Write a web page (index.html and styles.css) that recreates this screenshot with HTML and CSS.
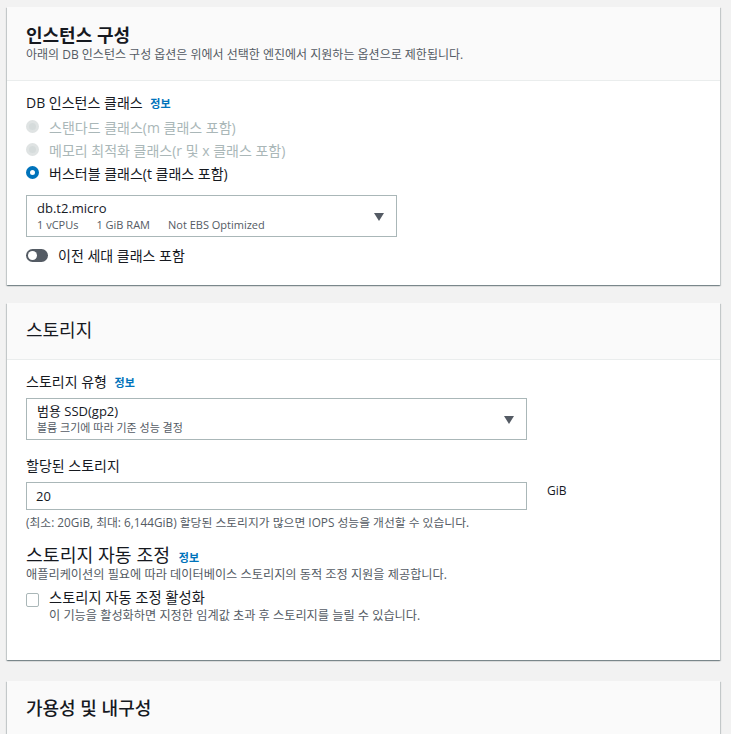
FILE: index.html
```html
<!DOCTYPE html>
<html lang="ko">
<head>
<meta charset="utf-8">
<title>DB 설정</title>
<link rel="stylesheet" href="styles.css">
</head>
<body>
<div class="page">
  <section class="card card-1">
    <header class="card-header">
      <h2 class="card-title">인스턴스 구성</h2>
      <p class="card-desc">아래의 DB 인스턴스 구성 옵션은 위에서 선택한 엔진에서 지원하는 옵션으로 제한됩니다.</p>
    </header>
    <div class="card-body body-1">
      <div class="label">DB 인스턴스 클래스 <span class="info">정보</span></div>
      <div class="radios">
        <div class="radio-row disabled"><span class="radio radio-off"></span><span>스탠다드 클래스(m 클래스 포함)</span></div>
        <div class="radio-row disabled"><span class="radio radio-off"></span><span>메모리 최적화 클래스(r 및 x 클래스 포함)</span></div>
        <div class="radio-row"><span class="radio radio-on"></span><span>버스터블 클래스(t 클래스 포함)</span></div>
      </div>
      <div class="select select-small">
        <div class="select-text">
          <div class="select-main">db.t2.micro</div>
          <div class="select-sub"><span>1 vCPUs</span><span>1 GiB RAM</span><span>Not EBS Optimized</span></div>
        </div>
        <span class="caret"></span>
      </div>
      <div class="toggle-row">
        <span class="toggle"><span class="knob"></span></span>
        <span>이전 세대 클래스 포함</span>
      </div>
    </div>
  </section>

  <section class="card card-2">
    <header class="card-header">
      <h2 class="card-title">스토리지</h2>
    </header>
    <div class="card-body body-2">
      <div class="label">스토리지 유형 <span class="info">정보</span></div>
      <div class="select select-wide">
        <div class="select-text">
          <div class="select-main">범용 SSD(gp2)</div>
          <div class="select-sub">볼륨 크기에 따라 기준 성능 결정</div>
        </div>
        <span class="caret"></span>
      </div>
      <div class="label label-alloc">할당된 스토리지</div>
      <div class="input-row">
        <div class="input">20</div>
        <span class="unit">GiB</span>
      </div>
      <div class="hint hint-latin">(최소: 20GiB, 최대: 6,144GiB) 할당된 스토리지가 많으면 IOPS 성능을 개선할 수 있습니다.</div>
      <div class="subhead">스토리지 자동 조정 <span class="info">정보</span></div>
      <div class="hint">애플리케이션의 필요에 따라 데이터베이스 스토리지의 동적 조정 지원을 제공합니다.</div>
      <div class="check-row">
        <span class="checkbox"></span>
        <div>
          <div class="check-label">스토리지 자동 조정 활성화</div>
          <div class="hint">이 기능을 활성화하면 지정한 임계값 초과 후 스토리지를 늘릴 수 있습니다.</div>
        </div>
      </div>
    </div>
  </section>

  <section class="card card-3">
    <header class="card-header">
      <h2 class="card-title">가용성 및 내구성</h2>
    </header>
  </section>
</div>
</body>
</html>
```

FILE: styles.css
```css
html, body {
  margin: 0;
  padding: 0;
  background: #f2f2f2;
}
body {
  font-family: "Open Sans", "Noto Sans CJK KR", sans-serif;
  color: #16191f;
  font-size: 14px;
  overflow: hidden;
}
.page {
  padding: 7px 11px 0 7px;
  display: flex;
  flex-direction: column;
}
.card {
  background: #fff;
  box-shadow: 0 1px 1px 0 rgba(0, 28, 36, .3), 1px 1px 1px 0 rgba(0, 28, 36, .15), -1px 1px 1px 0 rgba(0, 28, 36, .15);
}
.card-2 { margin-top: 18px; }
.card-3 { margin-top: 21px; }
.card-header {
  background: #fafafa;
  padding: 15px 19px 17px;
  border-bottom: 1px solid #eaeded;
}
.card-1 .card-header {
  padding: 17px 19px 16px;
}
.card-title {
  margin: 0;
  font-size: 18px;
  line-height: 24px;
  font-weight: 700;
}
.card-1 .card-title {
  line-height: 22px;
}
.card-2 .card-title {
  font-weight: 400;
}
.card-3 .card-title {
  font-weight: 500;
}
.card-desc {
  margin: 0;
  font-size: 12px;
  line-height: 18px;
  color: #545b64;
}
.card-body {
  padding: 12px 19px 19px;
}
.label {
  line-height: 20px;
  font-size: 14px;
}
.info {
  color: #0073bb;
  font-size: 11px;
  line-height: 1;
  font-weight: 700;
  margin-left: 4px;
}
.radios {
  margin-top: 2px;
}
.radio-row {
  height: 23px;
  display: flex;
  align-items: center;
  gap: 10px;
}
.radio-row.disabled {
  color: #aab7b8;
}
.radio {
  width: 13px;
  height: 13px;
  border-radius: 50%;
  box-sizing: border-box;
  flex: none;
}
.radio-off {
  background: #d5dbdb;
  border: 3px solid #dfe3e3;
}
.radio-on {
  background: #fff;
  border: 4px solid #0073bb;
}
.select {
  border: 1px solid #aab7b8;
  box-sizing: border-box;
  height: 42px;
  display: flex;
  align-items: center;
  justify-content: space-between;
  padding: 0 12px 0 10px;
  margin-top: 11px;
  background: #fff;
}
.select-small { width: 371px; }
.select-wide { width: 501px; margin-top: 6px; }
.select-main {
  font-size: 13px;
  line-height: 18px;
}
.select-sub {
  font-size: 11px;
  line-height: 16px;
  color: #545b64;
  display: flex;
  gap: 18px;
}
.caret {
  width: 0;
  height: 0;
  border-left: 5px solid transparent;
  border-right: 5px solid transparent;
  border-top: 8px solid #545b64;
  margin-top: 2px;
}
.toggle-row {
  display: flex;
  align-items: center;
  gap: 10px;
  margin-top: 7px;
  height: 22px;
}
.toggle {
  width: 22px;
  height: 13px;
  border-radius: 7px;
  background: #545b64;
  display: flex;
  align-items: center;
  padding-left: 2px;
  box-sizing: border-box;
}
.knob {
  width: 9px;
  height: 9px;
  border-radius: 50%;
  background: #fff;
}
.label-alloc {
  margin-top: 16px;
}
.input-row {
  display: flex;
  align-items: flex-start;
  gap: 20px;
  margin-top: 6px;
}
.input {
  width: 501px;
  height: 28px;
  box-sizing: border-box;
  border: 1px solid #aab7b8;
  padding: 0 9px;
  line-height: 26px;
  font-size: 13px;
}
.unit {
  line-height: 18px;
  font-size: 12px;
}
.hint {
  font-size: 12.2px;
  line-height: 16px;
  color: #545b64;
}
.hint-latin {
  font-size: 11.8px;
  margin-top: 4px;
}
.subhead {
  font-size: 18.3px;
  line-height: 23px;
  margin-top: 13px;
}
.subhead + .hint {
  margin-top: 1px;
}
.check-row {
  display: flex;
  align-items: flex-start;
  gap: 10px;
  margin-top: 5px;
  padding-bottom: 17px;
}
.checkbox {
  width: 13px;
  height: 14px;
  box-sizing: border-box;
  border: 1px solid #aab7b8;
  border-radius: 2px;
  margin-top: 5px;
  flex: none;
}
.check-label {
  line-height: 20px;
  font-size: 14.3px;
}
.card-3 .card-header {
  border-bottom: none;
  height: 60px;
}
```
